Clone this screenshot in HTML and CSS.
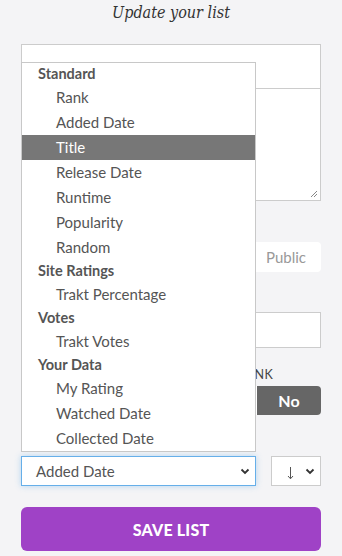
FILE: index.html
```html
<!DOCTYPE html>
<html>
<head>
<meta charset="utf-8">
<link rel="stylesheet" href="styles.css">
</head>
<body>
<div class="page">
  <h1 class="title">Update your list</h1>
  <div class="input name"></div>
  <div class="textarea">
    <svg class="grip" width="8" height="8" viewBox="0 0 8 8"><path d="M7 1 L1 7 M7 4 L4 7" stroke="#888" stroke-width="1"/></svg>
  </div>
  <div class="segmented">
    <div class="seg">Public</div>
  </div>
  <div class="input tags"></div>
  <div class="toggle">
    <div class="label">RANK</div>
    <div class="yesno"><div class="yn on">No</div></div>
  </div>
  <div class="sort-row">
    <div class="select focus">
      <span>Added Date</span>
      <svg class="chev" width="10" height="7" viewBox="0 0 10 7"><path d="M1.5 1.5 L5 5 L8.5 1.5" fill="none" stroke="#333" stroke-width="1.8"/></svg>
    </div>
    <div class="select dir">
      <svg class="arrow" width="7" height="14" viewBox="0 0 7 14"><path d="M3.5 1 V12.5 M1 10 L3.5 12.8 L6 10" fill="none" stroke="#555" stroke-width="1"/></svg>
      <svg class="chev" width="10" height="7" viewBox="0 0 10 7"><path d="M1.5 1.5 L5 5 L8.5 1.5" fill="none" stroke="#333" stroke-width="1.8"/></svg>
    </div>
  </div>
  <div class="save">SAVE LIST</div>

  <div class="dropdown">
    <div class="grp">Standard</div>
    <div class="opt">Rank</div>
    <div class="opt">Added Date</div>
    <div class="opt sel">Title</div>
    <div class="opt">Release Date</div>
    <div class="opt">Runtime</div>
    <div class="opt">Popularity</div>
    <div class="opt">Random</div>
    <div class="grp">Site Ratings</div>
    <div class="opt">Trakt Percentage</div>
    <div class="grp">Votes</div>
    <div class="opt">Trakt Votes</div>
    <div class="grp">Your Data</div>
    <div class="opt">My Rating</div>
    <div class="opt">Watched Date</div>
    <div class="opt">Collected Date</div>
  </div>
</div>
</body>
</html>
```

FILE: styles.css
```css
html, body {
  margin: 0;
  padding: 0;
  background: #f4f4f6;
}
body {
  font-family: Lato, "Open Sans", sans-serif;
  color: #555;
}
.page {
  position: relative;
  padding: 0 21px;
  width: 300px;
  display: flex;
  flex-direction: column;
}
.title {
  margin: 0;
  height: 44px;
  padding-top: 3px;
  box-sizing: border-box;
  text-align: center;
  font-family: "DejaVu Serif", "Liberation Serif", serif;
  font-stretch: condensed;
  font-style: italic;
  font-weight: normal;
  font-size: 16px;
  color: #333;
}
.input {
  background: #fff;
  border: 1px solid #ccc;
  box-sizing: border-box;
}
.name { height: 45px; }
.textarea {
  position: relative;
  background: #fff;
  border: 1px solid #ccc;
  border-top: none;
  height: 112px;
  box-sizing: border-box;
}
.grip { position: absolute; right: 2px; bottom: 2px; }
.segmented {
  margin-top: 41px;
  display: flex;
  justify-content: flex-end;
  height: 30px;
  background: #fff;
  border-radius: 4px;
}
.seg {
  width: 64px;
  box-sizing: border-box;
  font-size: 15px;
  color: #999;
  display: flex;
  align-items: center;
  padding-left: 9px;
}
.tags { height: 36px; margin-top: 40px; }
.toggle {
  margin-top: 20px;
  display: flex;
  flex-direction: column;
}
.label {
  height: 18px;
  line-height: 13px;
  font-size: 12.5px;
  color: #444;
  text-align: right;
  padding-right: 48px;
  letter-spacing: 0.3px;
}
.yesno {
  display: flex;
  justify-content: flex-end;
  height: 29px;
  background: #fff;
  border-radius: 4px;
}
.yn {
  width: 64px;
  display: flex;
  align-items: center;
  justify-content: center;
  font-size: 16px;
  font-weight: bold;
}
.yn.on {
  background: #666;
  color: #fff;
  border-radius: 0 4px 4px 0;
}
.sort-row {
  margin-top: 41px;
  display: flex;
  gap: 15px;
  height: 30px;
}
.select {
  position: relative;
  background: #fff;
  border: 1px solid #ccc;
  box-sizing: border-box;
  display: flex;
  align-items: center;
  font-size: 15px;
  color: #555;
}
.select.focus {
  flex: 0 0 235px;
  border-color: #66afe9;
  box-shadow: 0 0 6px rgba(102, 175, 233, 0.45);
  padding-left: 14px;
}
.select.dir { flex: 1; padding-left: 15px; }
.arrow { margin-top: 4px; }
.chev { position: absolute; right: 5px; top: 11px; }
.save {
  margin-top: 21px;
  height: 44px;
  background: #9f42c6;
  border-radius: 6px;
  color: #fff;
  font-weight: 900;
  font-size: 16px;
  display: flex;
  align-items: center;
  justify-content: center;
  letter-spacing: 0.2px;
}
.dropdown {
  position: absolute;
  left: 21px;
  top: 62px;
  width: 235px;
  box-sizing: border-box;
  background: #fff;
  border: 1px solid #c8c8c8;
  display: flex;
  flex-direction: column;
}
.grp {
  height: 22px;
  line-height: 22px;
  padding-left: 16px;
  font-weight: bold;
  font-size: 14.5px;
  color: #555;
}
.opt {
  height: 25px;
  line-height: 25px;
  padding-left: 34px;
  font-size: 15px;
  color: #555;
}
.opt.sel {
  background: #777;
  color: #fff;
}
```
